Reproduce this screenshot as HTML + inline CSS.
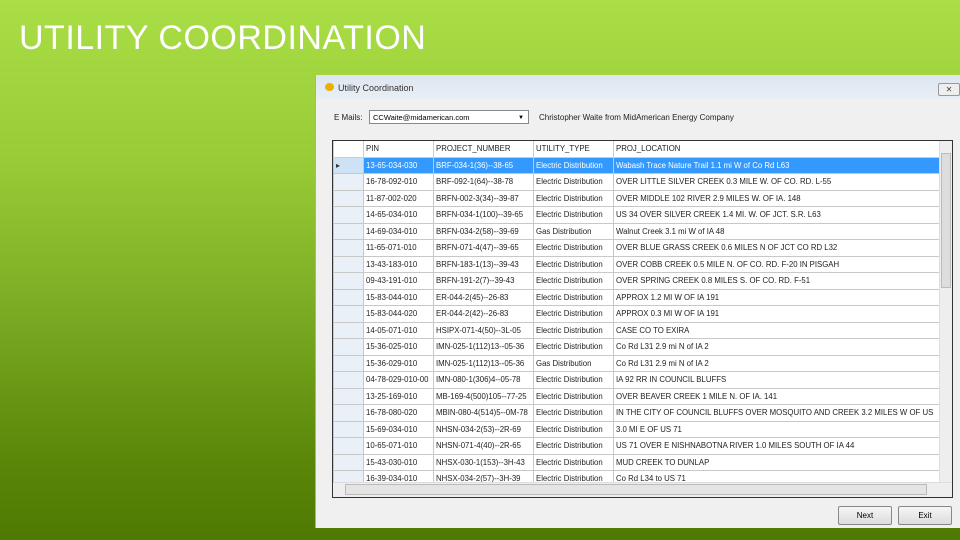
<!DOCTYPE html>
<html><head><style>
body{margin:0;width:960px;height:540px;overflow:hidden;background:linear-gradient(#aade46 0%,#98cb36 30%,#78a822 60%,#5a8708 85%,#4e7a04 100%);font-family:"Liberation Sans",sans-serif;position:relative}
h1{position:absolute;left:19px;top:19px;margin:0;font-weight:normal;font-size:34px;color:#fff;letter-spacing:0.5px}
.win{position:absolute;left:315px;top:75px;width:645px;height:453px;background:#f0f0f0;border-left:1px solid #aab}
.tb{position:absolute;left:0;top:0;width:645px;height:24px;background:linear-gradient(#dde6f0,#e8eef5)}
.tb span{position:absolute;left:22px;top:8px;font-size:9px;color:#333}
.ic{position:absolute;left:9px;top:8px;width:9px;height:8px;border-radius:50%;background:#e8b000}
.x{position:absolute;left:622px;top:8px;width:20px;height:11px;border:1px solid #999;border-radius:2px;font-size:8px;text-align:center;line-height:11px;color:#444;background:#eee}
.lbl{position:absolute;font-size:8px;color:#222}
.cb{position:absolute;left:53px;top:35px;width:160px;height:14px;border:1px solid #888;background:#fff;font-size:7.5px;line-height:14px;padding-left:3px;box-sizing:border-box}
.cb i{position:absolute;right:4px;top:0;font-style:normal;font-size:6px}
.grid{position:absolute;left:16px;top:65px;width:619px;height:356px;border:1px solid #333;background:#fff;overflow:hidden}
table{border-collapse:collapse;font-size:7.8px;color:#222;position:absolute;left:0;top:-1px;table-layout:fixed}
td{border:1px solid #c8c8c8;height:15.5px;padding:0 0 0 2px;white-space:nowrap;overflow:hidden}
tr.h td{background:#fff;border-color:#ccc}
td.rh{background:#e9f0f8;width:27px}
tr.s td{background:#3399ff;color:#fff}
tr.s td.rh{background:#cde3f5;color:#333}
.vs{position:absolute;right:0;top:0;width:12px;height:341px;background:#eee;border-left:1px solid #ddd}
.vs div{position:absolute;left:1px;top:12px;width:10px;height:135px;background:#ddd;border:1px solid #bbb;box-sizing:border-box}
.hs{position:absolute;left:0;bottom:0;width:619px;height:14px;background:#eee;border-top:1px solid #ddd}
.hs div{position:absolute;left:12px;top:1px;width:582px;height:11px;background:#e4e4e4;border:1px solid #bbb;box-sizing:border-box}
.btn{position:absolute;top:431px;width:52px;height:17px;border:1px solid #888;background:linear-gradient(#f6f6f6,#dcdcdc);font-size:8px;text-align:center;line-height:17px;border-radius:2px}
</style></head><body>
<h1>UTILITY COORDINATION</h1>
<div class="win">
<div class="tb"><div class="ic"></div><span>Utility Coordination</span><div class="x">✕</div></div>
<div class="lbl" style="left:18px;top:38px">E Mails:</div>
<div class="cb">CCWaite@midamerican.com<i>▼</i></div>
<div class="lbl" style="left:223px;top:38px">Christopher Waite from MidAmerican Energy Company</div>
<div class="grid">
<table>
<colgroup><col style="width:29px"><col style="width:70px"><col style="width:100px"><col style="width:80px"><col style="width:329px"></colgroup>
<tr class="h"><td class="rh" style="background:#fff"></td><td>PIN</td><td>PROJECT_NUMBER</td><td>UTILITY_TYPE</td><td>PROJ_LOCATION</td></tr>
<tr class="s"><td class="rh">▸</td><td>13-65-034-030</td><td>BRF-034-1(36)--38-65</td><td>Electric Distribution</td><td>Wabash Trace Nature Trail 1.1 mi W of Co Rd L63</td></tr>
<tr><td class="rh"></td><td>16-78-092-010</td><td>BRF-092-1(64)--38-78</td><td>Electric Distribution</td><td>OVER LITTLE SILVER CREEK 0.3 MILE W. OF CO. RD. L-55</td></tr>
<tr><td class="rh"></td><td>11-87-002-020</td><td>BRFN-002-3(34)--39-87</td><td>Electric Distribution</td><td>OVER MIDDLE 102 RIVER 2.9 MILES W. OF IA. 148</td></tr>
<tr><td class="rh"></td><td>14-65-034-010</td><td>BRFN-034-1(100)--39-65</td><td>Electric Distribution</td><td>US 34 OVER SILVER CREEK 1.4 MI. W. OF JCT. S.R. L63</td></tr>
<tr><td class="rh"></td><td>14-69-034-010</td><td>BRFN-034-2(58)--39-69</td><td>Gas Distribution</td><td>Walnut Creek 3.1 mi W of IA 48</td></tr>
<tr><td class="rh"></td><td>11-65-071-010</td><td>BRFN-071-4(47)--39-65</td><td>Electric Distribution</td><td>OVER BLUE GRASS CREEK 0.6 MILES N OF JCT CO RD L32</td></tr>
<tr><td class="rh"></td><td>13-43-183-010</td><td>BRFN-183-1(13)--39-43</td><td>Electric Distribution</td><td>OVER COBB CREEK 0.5 MILE N. OF CO. RD. F-20 IN PISGAH</td></tr>
<tr><td class="rh"></td><td>09-43-191-010</td><td>BRFN-191-2(7)--39-43</td><td>Electric Distribution</td><td>OVER SPRING CREEK 0.8 MILES S. OF CO. RD. F-51</td></tr>
<tr><td class="rh"></td><td>15-83-044-010</td><td>ER-044-2(45)--26-83</td><td>Electric Distribution</td><td>APPROX 1.2 MI W OF IA 191</td></tr>
<tr><td class="rh"></td><td>15-83-044-020</td><td>ER-044-2(42)--26-83</td><td>Electric Distribution</td><td>APPROX 0.3 MI W OF IA 191</td></tr>
<tr><td class="rh"></td><td>14-05-071-010</td><td>HSIPX-071-4(50)--3L-05</td><td>Electric Distribution</td><td>CASE CO TO EXIRA</td></tr>
<tr><td class="rh"></td><td>15-36-025-010</td><td>IMN-025-1(112)13--05-36</td><td>Electric Distribution</td><td>Co Rd L31 2.9 mi N of IA 2</td></tr>
<tr><td class="rh"></td><td>15-36-029-010</td><td>IMN-025-1(112)13--05-36</td><td>Gas Distribution</td><td>Co Rd L31 2.9 mi N of IA 2</td></tr>
<tr><td class="rh"></td><td>04-78-029-010-00</td><td>IMN-080-1(306)4--05-78</td><td>Electric Distribution</td><td>IA 92 RR IN COUNCIL BLUFFS</td></tr>
<tr><td class="rh"></td><td>13-25-169-010</td><td>MB-169-4(500)105--77-25</td><td>Electric Distribution</td><td>OVER BEAVER CREEK 1 MILE N. OF IA. 141</td></tr>
<tr><td class="rh"></td><td>16-78-080-020</td><td>MBIN-080-4(514)5--0M-78</td><td>Electric Distribution</td><td>IN THE CITY OF COUNCIL BLUFFS OVER MOSQUITO AND CREEK 3.2 MILES W OF US</td></tr>
<tr><td class="rh"></td><td>15-69-034-010</td><td>NHSN-034-2(53)--2R-69</td><td>Electric Distribution</td><td>3.0 MI E OF US 71</td></tr>
<tr><td class="rh"></td><td>10-65-071-010</td><td>NHSN-071-4(40)--2R-65</td><td>Electric Distribution</td><td>US 71 OVER E NISHNABOTNA RIVER 1.0 MILES SOUTH OF IA 44</td></tr>
<tr><td class="rh"></td><td>15-43-030-010</td><td>NHSX-030-1(153)--3H-43</td><td>Electric Distribution</td><td>MUD CREEK TO DUNLAP</td></tr>
<tr><td class="rh"></td><td>16-39-034-010</td><td>NHSX-034-2(57)--3H-39</td><td>Electric Distribution</td><td>Co Rd L34 to US 71</td></tr>
<tr><td class="rh"></td><td></td><td></td><td></td><td></td></tr>
</table>
<div class="vs"><div></div></div>
<div class="hs"><div></div></div>
</div>
<div class="btn" style="left:522px">Next</div>
<div class="btn" style="left:582px">Exit</div>
</div>
</body></html>
